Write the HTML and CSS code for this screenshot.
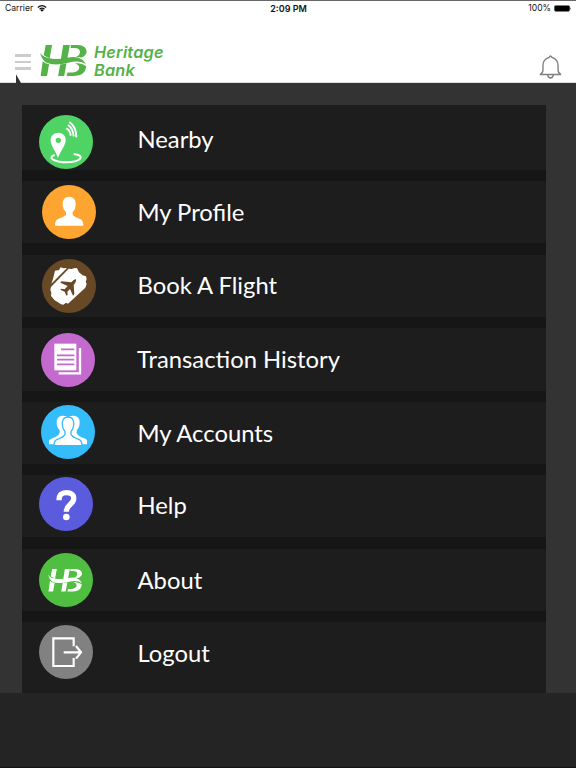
FILE: index.html
```
<!DOCTYPE html>
<html lang="en">
<head>
<meta charset="utf-8">
<title>Heritage Bank</title>
<link rel="stylesheet" href="styles.css">
</head>
<body>
<svg class="defs" width="0" height="0">
  <symbol id="hb" viewBox="0 0 140 96">
    <path d="M17 2H36L29 41Q20 38 11 32ZM8 50Q16 57 27 59L21 94H2ZM69 2H89L82 40Q73 45 62 45ZM60 60Q70 59 79 56L72 94H54Z"/>
    <path d="M92 2H112Q139 3 139 23Q137 35 124 39L107 37Q119 34 119 22Q118 11 104 11H91ZM113 56Q132 59 138 66Q134 94 102 94H79L82 84H97Q115 82 117 69Q117 61 104 57Z"/>
    <path d="M0 25Q9 40 37 43Q60 45 83 39Q125 31 138 61Q120 46 87 54Q43 66 18 54Q5 45 0 25Z"/>
  </symbol>
</svg>
<header class="header">
  <div class="status">
    <span class="carrier">Carrier
      <svg class="wifi" viewBox="0 0 28 20"><path d="M2 7Q14-3 26 7M7 12Q14 6 21 12" fill="none" stroke="#111" stroke-width="3.6"/><path d="M9 14Q14 10 19 14L14 19Z"/></svg>
    </span>
    <span class="time">2:09 PM</span>
    <span class="battery">100%
      <svg viewBox="0 0 56 20"><rect x="1" y="1" width="48" height="18" rx="4"/><path d="M51 6Q55 10 51 14Z"/></svg>
    </span>
  </div>
  <div class="bar">
    <div class="burger"><i></i><i></i><i></i></div>
    <svg class="logo"><use href="#hb"/></svg>
    <div class="brand"><span>Heritage</span><span>Bank</span></div>
    <svg class="bell" viewBox="0 0 66 70"><path d="M2 57Q11 54 11 44V30Q11 13 29 7Q33-1 37 7Q55 13 55 30V44Q55 54 64 57ZM25 58Q26 67 33 67Q40 67 41 58" fill="none" stroke="#808080" stroke-width="4"/></svg>
  </div>
  <svg class="notch" viewBox="0 0 16 28"><path d="M0 0L16 28H0Z" fill="#333"/></svg>
</header>
<main class="content">
  <nav class="menu">
    <a class="item nearby"><svg class="icon" viewBox="0 0 162 162"><circle cx="81" cy="81" r="81" fill="#4fd365"/><path d="M58 53C42 53 34 64 35 77C36 91 46 102 57 128C68 102 80 91 80 75C80 62 71 53 58 53ZM58 68A8 8 0 1 1 58 84A8 8 0 1 1 58 68Z" fill="#fff" fill-rule="evenodd"/><g fill="none" stroke="#fff" stroke-width="6"><path d="M47 120C22 128 48 142 82 142C125 142 142 121 104 117M82 40Q94 46 95 62M87 30Q102 39 104 64M91 21Q112 35 112 67"/></g></svg><span>Nearby</span></a>
    <a class="item profile"><svg class="icon" viewBox="0 0 162 162"><circle cx="81" cy="81" r="81" fill="#fda530"/><path d="M81 35C94 35 101 44 101 57Q101 72 92 81V90Q98 97 115 102Q124 107 124 122H39Q38 107 48 102Q64 97 72 90V81Q62 72 62 57C62 44 69 35 81 35Z" fill="#fff"/></svg><span>My Profile</span></a>
    <a class="item flight"><svg class="icon" viewBox="0 0 162 162"><circle cx="81" cy="81" r="81" fill="#684926"/><path d="M39 35L51 33L56 25L64 28L75 27L28 74L33 60ZM80 29L89 30L99 27L105 28L111 40L122 49L132 52L134 61L131 68L134 75L130 86L78 134L72 131L64 137L57 136L48 130L38 124L27 111L28 101L25 92L27 84Z" fill="#fff"/><path d="M100 61Q96 61 88 70L58 67L55 71L77 81L68 91L58 89L55 92L68 98L73 110L77 107L76 98L84 90L93 110L97 106L95 78Q104 67 102 61Z" fill="#684926"/></svg><span>Book A Flight</span></a>
    <a class="item history"><svg class="icon" viewBox="0 0 162 162"><circle cx="81" cy="81" r="81" fill="#c46ace"/><path d="M40 32H106V112H40Z" fill="#fff"/><path d="M60 49H100M48 67H100M48 80H100M48 94H100" stroke="#c46ace" stroke-width="5"/><path d="M117 45V121H53" fill="none" stroke="#fff" stroke-width="7"/></svg><span>Transaction History</span></a>
    <a class="item accounts"><svg class="icon" viewBox="0 0 162 162"><circle cx="81" cy="81" r="81" fill="#35bdfb"/><g fill="#fff"><path d="M67 32C82 32 87 42 87 53Q86 66 80 76V84Q86 94 102 100V118H24V107Q25 102 36 99Q52 93 56 84V76Q47 67 47 51C47 39 54 32 67 32Z"/><path d="M96 32C81 32 76 42 76 53Q77 66 83 76V84Q77 94 61 100V118H138V107Q138 102 127 99Q111 93 107 84V76Q116 67 116 51C116 39 109 32 96 32Z"/><path d="M81 36C96 36 99 48 98 60Q97 72 90 80V89Q97 98 115 104Q123 108 123 122H39Q39 108 47 104Q65 98 72 89V80Q65 72 64 60C63 48 66 36 81 36Z" stroke="#35bdfb" stroke-width="4"/></g></svg><span>My Accounts</span></a>
    <a class="item help"><svg class="icon" viewBox="0 0 162 162"><circle cx="81" cy="81" r="81" fill="#5b5bde"/><path d="M60 70C60 52 69 47 82 47C97 47 105 54 104 65C104 82 82 82 82 104" fill="none" stroke="#fff" stroke-width="16"/><circle cx="82" cy="120" r="10" fill="#fff"/></svg><span>Help</span></a>
    <a class="item about"><svg class="icon" viewBox="0 0 162 162"><circle cx="81" cy="81" r="81" fill="#50bf41"/><use href="#hb" x="27" y="46" width="103" height="71" fill="#fff"/></svg><span>About</span></a>
    <a class="item logout"><svg class="icon" viewBox="0 0 162 162"><circle cx="81" cy="81" r="81" fill="#818181"/><path d="M104 64V40H43V123H104V99M74 82H125M111 63L126 82L111 101" fill="none" stroke="#fff" stroke-width="6.5"/></svg><span>Logout</span></a>
  </nav>
</main>
</body>
</html>
```
FILE: styles.css
```
* { box-sizing: border-box; }
body {
  margin: 0;
  width: 576px;
  height: 768px;
  overflow: hidden;
  background: #242424;
  border-bottom: 1px solid #111;
  font-family: Lato, sans-serif;
}
.defs { position: absolute; }
.header {
  position: relative;
  height: 83px;
  background: #fff;
  border-top: 1px solid #666;
  border-bottom: 1px solid #ddd;
}
.status {
  display: grid;
  grid-template-columns: 1fr 1fr 1fr;
  height: 15px;
  padding: 0 4px 0 5px;
  font: 8.6px/15px Inter, sans-serif;
  color: #111;
}
.status svg { height: 7px; }
.carrier, .battery { display: flex; align-items: center; gap: 4px; }
.wifi { width: 10px; }
.time { text-align: center; font-weight: 600; font-size: 9px; }
.battery { justify-content: flex-end; gap: 3px; }
.battery svg { width: 18px; }
.bar { display: flex; align-items: flex-start; padding: 28px 14px 0 15px; }
.burger { display: grid; gap: 4px; width: 16px; margin: 10px 9px 0 0; }
.burger i { height: 2.6px; background: #ccc; }
.logo { width: 47px; height: 33px; fill: #55b249; }
.brand {
  margin: -1px auto 0 7px;
  font: italic 600 16.3px/18px Inter, sans-serif;
  letter-spacing: .2px;
  color: #55b249;
}
.brand span { display: block; height: 18px; }
.bell { width: 23px; height: 24px; margin-top: 11px; }
.notch { position: absolute; left: 16px; bottom: -1px; width: 5px; height: 9px; }
.content { height: 610px; padding: 22px 31px 0 22px; background: #333; }
.menu {
  display: grid;
  grid-template-rows: 76px 74px 73px 74px 73px 74px 73px 71px;
  width: 524px;
  background: #1d1d1d;
}
.item {
  display: flex;
  align-items: flex-start;
  padding: 4px 0 0 17px;
  border-bottom: 11px solid #161616;
  color: #fff;
  font-size: 23.8px;
  line-height: 30px;
}
.icon { flex: none; width: 54px; height: 54px; }
.item span { margin: 12px 0 0 44.5px; white-space: nowrap; }
.nearby { padding-top: 10px; }
.nearby span { margin-top: 9px; }
.profile, .flight { padding-left: 20px; }
.profile span, .flight span { margin-left: 41.5px; }
.flight span { margin-top: 11px; }
.profile, .help { border-bottom-width: 12px; }
.history { padding: 5px 0 0 19px; }
.history span { margin: 11px 0 0 42px; }
.accounts { padding: 3px 0 0 19px; }
.accounts span { margin: 13px 0 0 42.5px; }
.help { padding-top: 2px; }
.help span { margin-top: 13px; }
.logout { padding-top: 3px; border-bottom: 0; }
.logout span { margin-top: 13px; }
```
